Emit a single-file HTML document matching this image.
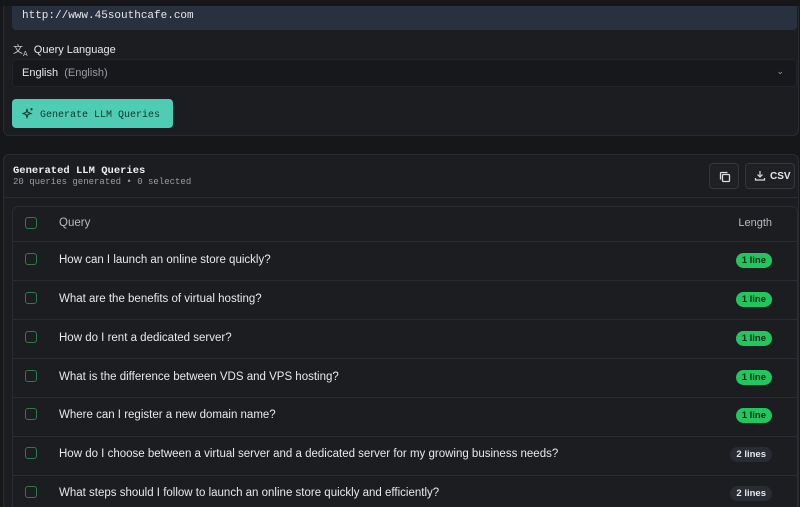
<!DOCTYPE html>
<html><head><meta charset="utf-8"><style>
*{box-sizing:border-box;margin:0;padding:0}
html,body{width:800px;height:507px;overflow:hidden}
body{background:#161719;font-family:"Liberation Sans",sans-serif;color:#e5e7eb;position:relative}
.card{position:absolute;left:3px;right:1px;background:#1c1d21;border:1px solid #2a2c31;border-radius:6px}
.mono{font-family:"Liberation Mono",monospace}
.row{position:absolute;left:0;right:0;height:39px;border-top:1px solid #2a2c31}
.cb{position:absolute;left:12px;width:12px;height:12px;border:1.5px solid #2f7a4a;border-radius:3px}
.q{position:absolute;left:46px;font-size:11.5px;color:#e8e9ec}
.badge{position:absolute;right:25px;height:15px;padding:0 6px;border-radius:8px;font-size:9.5px;font-weight:bold;line-height:15px}
.g{background:#22c55e;color:#0b2a16}
.d{background:#2a2c33;color:#e5e7eb}
</style></head><body>
<div class="card" style="top:6px;height:130px;border-top:none;border-radius:0 0 6px 6px">
 <div class="mono" style="position:absolute;left:8px;right:1px;top:0;height:24px;background:#29303f;border-radius:0 0 4px 4px;font-size:11px;padding:4px 0 0 10px;color:#e5e7eb">http://www.45southcafe.com</div>
 <div style="position:absolute;left:9px;top:35px;font-size:11px;color:#e8e9ec"><span style="font-size:10px;color:#ccc">文<sub style="font-size:7px">A</sub></span>&nbsp; Query Language</div>
 <div style="position:absolute;left:8px;right:1px;top:53px;height:28px;background:#17181b;border:1px solid #222429;border-radius:4px;font-size:11px;padding:7px 0 0 9px">English <span style="color:#9a9ca3">&nbsp;(English)</span><span style="position:absolute;right:12px;top:6px;color:#9a9ca3;font-size:9px">&#8964;</span></div>
 <div class="mono" style="position:absolute;left:8px;top:93px;width:161px;height:29px;background:#4ecdb4;border-radius:4px;color:#14332c;font-size:10px;padding:8px 0 0 10px;white-space:nowrap">
  <svg width="12" height="12" viewBox="0 0 12 12" style="vertical-align:-2px" fill="none" stroke="#14332c" stroke-width="1.1"><path d="M5 2.5L6 5.5 9 6.5 6 7.5 5 10.5 4 7.5 1 6.5 4 5.5Z"/><path d="M9.5 1v2.5M8.3 2.2h2.4"/></svg>&nbsp;Generate LLM Queries</div>
</div>
<div class="card" style="top:154px;height:360px">
 <div class="mono" style="position:absolute;left:9px;top:10px;font-size:10.5px;font-weight:bold;color:#eee">Generated LLM Queries</div>
 <div class="mono" style="position:absolute;left:9px;top:22px;font-size:9px;color:#9a9ca3">20 queries generated • 0 selected</div>
 <div style="position:absolute;left:705px;top:8px;width:30px;height:26px;border:1px solid #34363c;border-radius:4px;background:#1f2024">
  <svg width="14" height="14" viewBox="0 0 14 14" style="position:absolute;left:8px;top:6px" fill="none" stroke="#ddd" stroke-width="1.3"><rect x="4.5" y="4.5" width="7" height="7" rx="1"/><path d="M2.5 9.5V3.5a1 1 0 0 1 1-1h6"/></svg></div>
 <div style="position:absolute;left:741px;top:8px;width:50px;height:26px;border:1px solid #34363c;border-radius:4px;background:#1f2024;font-size:10px;font-weight:bold;padding:7px 0 0 24px;color:#e5e7eb">CSV
  <svg width="12" height="12" viewBox="0 0 12 12" style="position:absolute;left:8px;top:6px" fill="none" stroke="#ddd" stroke-width="1.2"><path d="M6 1v6M3.5 4.5L6 7l2.5-2.5M1.5 8v2h9V8"/></svg></div>
 <div style="position:absolute;left:0;right:0;top:42px;border-top:1px solid #2a2c31"></div>
 <div style="position:absolute;left:8px;right:0;top:51px;height:320px;border:1px solid #2a2c31;border-radius:6px;background:#1c1d21">
  <div style="position:absolute;left:0;right:0;top:0;height:34px">
   <div class="cb" style="top:10px"></div>
   <div class="q" style="top:10px;color:#b8bac0">Query</div>
   <div style="position:absolute;right:25px;top:10px;font-size:11px;color:#b8bac0">Length</div>
  </div>
  <div class="row" style="top:34px"><div class="cb" style="top:11px"></div><div class="q" style="top:12px">How can I launch an online store quickly?</div><div class="badge g" style="top:11px">1 line</div></div>
  <div class="row" style="top:73px"><div class="cb" style="top:11px"></div><div class="q" style="top:12px">What are the benefits of virtual hosting?</div><div class="badge g" style="top:11px">1 line</div></div>
  <div class="row" style="top:112px"><div class="cb" style="top:11px"></div><div class="q" style="top:12px">How do I rent a dedicated server?</div><div class="badge g" style="top:11px">1 line</div></div>
  <div class="row" style="top:151px"><div class="cb" style="top:11px"></div><div class="q" style="top:12px">What is the difference between VDS and VPS hosting?</div><div class="badge g" style="top:11px">1 line</div></div>
  <div class="row" style="top:190px"><div class="cb" style="top:10px"></div><div class="q" style="top:11px">Where can I register a new domain name?</div><div class="badge g" style="top:10px">1 line</div></div>
  <div class="row" style="top:229px"><div class="cb" style="top:10px"></div><div class="q" style="top:11px">How do I choose between a virtual server and a dedicated server for my growing business needs?</div><div class="badge d" style="top:10px">2 lines</div></div>
  <div class="row" style="top:268px"><div class="cb" style="top:10px"></div><div class="q" style="top:11px">What steps should I follow to launch an online store quickly and efficiently?</div><div class="badge d" style="top:10px">2 lines</div></div>
 </div>
</div>
</body></html>
